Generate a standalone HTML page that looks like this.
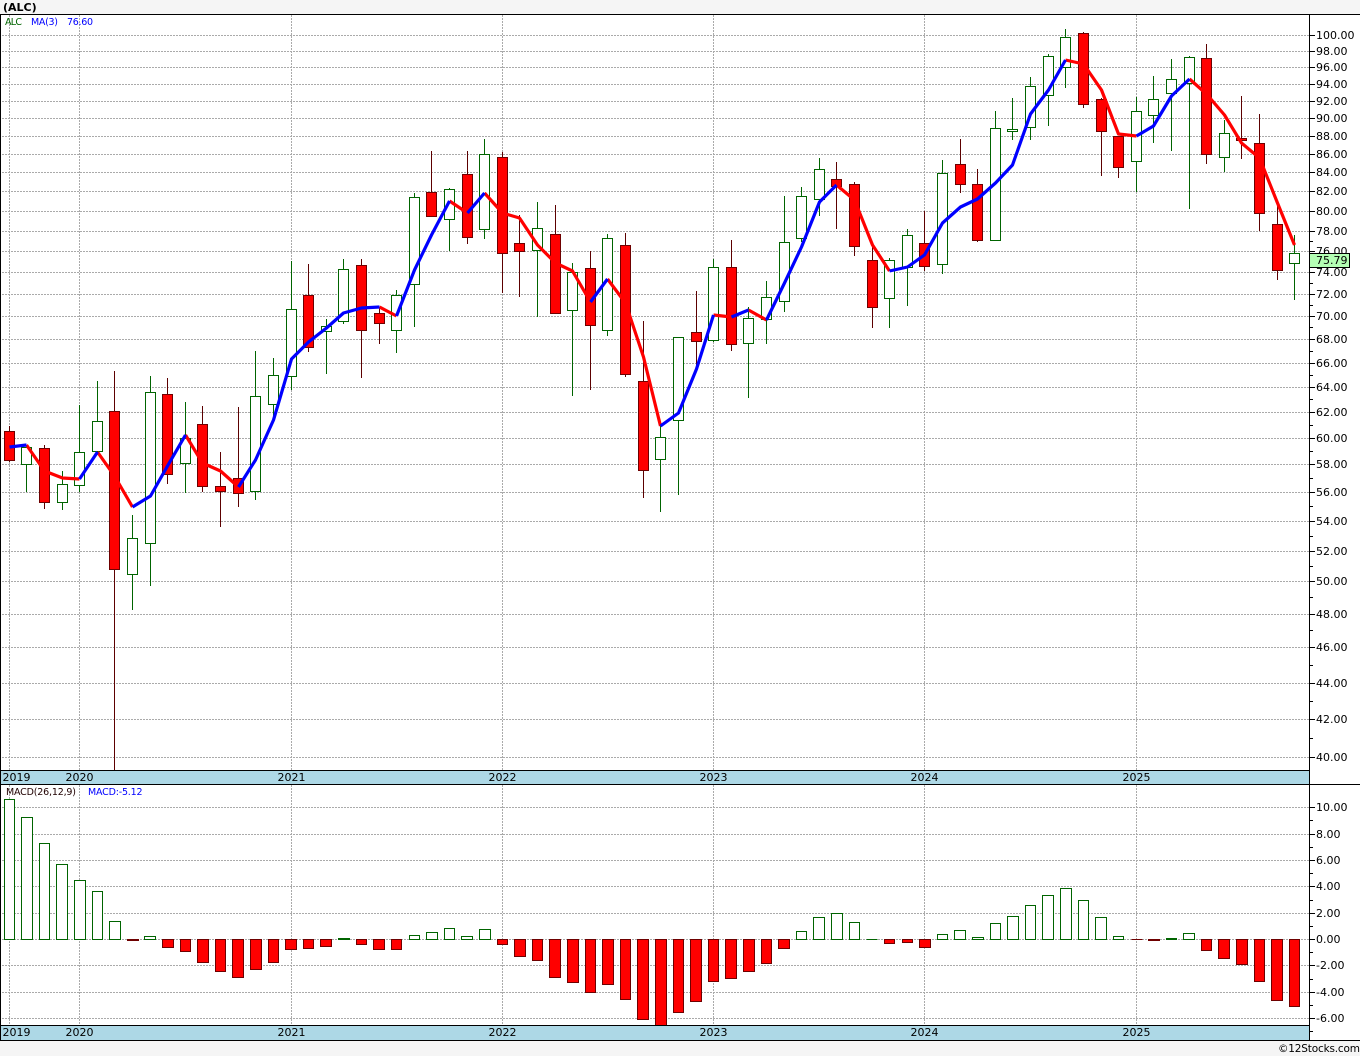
<!DOCTYPE html>
<html lang="en">
<head>
<meta charset="utf-8">
<title>(ALC)</title>
<style>
html,body{margin:0;padding:0;width:1360px;height:1056px;overflow:hidden;background:#f5f5f5}
svg{position:absolute;left:0;top:0;display:block}
text{font-family:"DejaVu Sans","Liberation Sans",sans-serif;fill:#000}
.ax{font-size:11px}
.lg{font-size:9.5px}
</style>
</head>
<body>
<svg width="1360" height="1056" viewBox="0 0 1360 1056" xmlns="http://www.w3.org/2000/svg">
<rect x="0" y="0" width="1360" height="1056" fill="#f5f5f5"/>
<rect x="0" y="14" width="1360" height="1026" fill="#fff"/>
<text x="3" y="11" style="font-size:11px;font-weight:bold">(ALC)</text>

<!-- grid -->
<g fill="none" stroke="#aaaaaa" stroke-width="1" stroke-dasharray="2 1" shape-rendering="crispEdges">
<path d="M2 35.5H1309M2 51.5H1309M2 67.5H1309M2 84.5H1309M2 101.5H1309M2 118.5H1309M2 136.5H1309M2 154.5H1309M2 172.5H1309M2 191.5H1309M2 211.5H1309M2 231.5H1309M2 251.5H1309M2 272.5H1309M2 294.5H1309M2 316.5H1309M2 339.5H1309M2 363.5H1309M2 387.5H1309M2 412.5H1309M2 438.5H1309M2 464.5H1309M2 492.5H1309M2 521.5H1309M2 551.5H1309M2 581.5H1309M2 614.5H1309M2 647.5H1309M2 683.5H1309M2 719.5H1309M2 757.5H1309"/>
<path d="M2 807.5H1309M2 834.5H1309M2 860.5H1309M2 886.5H1309M2 913.5H1309M2 939.5H1309M2 965.5H1309M2 992.5H1309M2 1018.5H1309"/>
<path d="M9.5 15V770M79.5 15V770M291.5 15V770M502.5 15V770M713.5 15V770M924.5 15V770M1136.5 15V770M9.5 785V1025M79.5 785V1025M291.5 785V1025M502.5 785V1025M713.5 785V1025M924.5 785V1025M1136.5 785V1025"/>
</g>

<!-- wicks -->
<g fill="none" stroke-width="1" shape-rendering="crispEdges">
<path stroke="#006400" d="M26.5 445V492M62.5 471V510M79.5 405V492M97.5 381V452M132.5 515V610M150.5 376V586M185.5 402V493M255.5 351V500M273.5 358V420M291.5 261V390M326.5 319V374M343.5 259V324M396.5 290V353M414.5 193V327M449.5 188V251M484.5 139V239M537.5 202V317M572.5 263V396M607.5 234V336M660.5 426V512M678.5 337V495M713.5 259V342M748.5 307V398M766.5 281V344M784.5 196V312M801.5 187V242M819.5 158V216M889.5 258V328M907.5 229V306M942.5 160V274M995.5 111V240M1012.5 98V140M1030.5 77V140M1048.5 54V126M1065.5 29V88M1136.5 97V192M1153.5 76V143M1171.5 59V151M1189.5 56V209M1224.5 120V172M1294.5 235V300"/>
<path stroke="#5c0000" d="M9.5 426V462M44.5 445V509M114.5 371V770M167.5 378V484M202.5 406V492M220.5 452V527M238.5 407V507M308.5 264V352M361.5 259V378M379.5 308V344M431.5 151V216M467.5 151V244M502.5 152V293M519.5 215V297M555.5 205V314M590.5 251V390M625.5 233V377M643.5 321V498M696.5 291V370M731.5 240V351M836.5 162V229M854.5 182V256M872.5 245V328M924.5 211V271M960.5 139V193M977.5 169V242M1083.5 32V108M1101.5 98V176M1118.5 136V178M1206.5 44V164M1241.5 96V159M1259.5 114V231M1277.5 202V280"/>
</g>

<!-- candle bodies -->
<g stroke-width="1" shape-rendering="crispEdges">
<path fill="#fff" stroke="#006400" d="M21.5 447.5h10v17h-10zM57.5 484.5h10v18h-10zM74.5 452.5h10v33h-10zM92.5 421.5h10v30h-10zM127.5 538.5h10v36h-10zM145.5 392.5h10v151h-10zM180.5 438.5h10v25h-10zM250.5 396.5h10v95h-10zM268.5 375.5h10v29h-10zM286.5 309.5h10v67h-10zM321.5 326.5h10v5h-10zM338.5 269.5h10v52h-10zM391.5 295.5h10v35h-10zM409.5 197.5h10v87h-10zM444.5 189.5h10v30h-10zM479.5 154.5h10v75h-10zM532.5 228.5h10v22h-10zM567.5 272.5h10v38h-10zM602.5 238.5h10v92h-10zM655.5 437.5h10v22h-10zM673.5 337.5h10v83h-10zM708.5 267.5h10v73h-10zM743.5 318.5h10v25h-10zM761.5 297.5h10v22h-10zM779.5 242.5h10v59h-10zM796.5 196.5h10v42h-10zM814.5 169.5h10v30h-10zM884.5 260.5h10v38h-10zM902.5 235.5h10v32h-10zM937.5 173.5h10v91h-10zM990.5 128.5h10v112h-10zM1007.5 129.5h10v2h-10zM1025.5 86.5h10v41h-10zM1043.5 56.5h10v39h-10zM1060.5 37.5h10v30h-10zM1131.5 111.5h10v50h-10zM1148.5 99.5h10v16h-10zM1166.5 79.5h10v14h-10zM1184.5 57.5h10v26h-10zM1219.5 133.5h10v24h-10zM1289.5 253.5h10v10h-10z"/>
<path fill="#ff0000" stroke="#6e0000" d="M4.5 431.5h10v29h-10zM39.5 448.5h10v54h-10zM109.5 411.5h10v158h-10zM162.5 394.5h10v80h-10zM197.5 424.5h10v62h-10zM215.5 486.5h10v5h-10zM233.5 478.5h10v15h-10zM303.5 295.5h10v52h-10zM356.5 265.5h10v65h-10zM374.5 313.5h10v10h-10zM426.5 192.5h10v24h-10zM462.5 174.5h10v63h-10zM497.5 157.5h10v96h-10zM514.5 243.5h10v8h-10zM550.5 234.5h10v79h-10zM585.5 268.5h10v57h-10zM620.5 245.5h10v129h-10zM638.5 381.5h10v89h-10zM691.5 332.5h10v9h-10zM726.5 267.5h10v77h-10zM831.5 179.5h10v7h-10zM849.5 184.5h10v62h-10zM867.5 260.5h10v47h-10zM919.5 243.5h10v23h-10zM955.5 164.5h10v20h-10zM972.5 184.5h10v56h-10zM1078.5 33.5h10v71h-10zM1096.5 99.5h10v32h-10zM1113.5 136.5h10v31h-10zM1201.5 58.5h10v96h-10zM1236.5 138.5h10v2h-10zM1254.5 143.5h10v70h-10zM1272.5 224.5h10v46h-10z"/>
</g>

<!-- moving average -->
<g fill="none" stroke-width="3.2" stroke-linejoin="round" stroke-linecap="butt">
<path stroke="#ff0000" d="M26.5 445L44.5 471L62.5 478L79.5 479M97.5 452L114.5 476L132.5 507M185.5 435L202.5 463L220.5 471L238.5 487M379.5 307L396.5 316M449.5 201L467.5 213M484.5 193L502.5 213L519.5 218L537.5 245L555.5 263L572.5 271L590.5 302M607.5 279L625.5 303L643.5 357L660.5 426M713.5 315L731.5 317M748.5 310L766.5 320M836.5 185L854.5 200L872.5 245L889.5 271M1065.5 60L1083.5 64L1101.5 90L1118.5 134L1136.5 136M1189.5 79L1206.5 94L1224.5 115L1241.5 143L1259.5 158L1277.5 203L1294.5 245"/>
<path stroke="#0000ff" d="M9.5 447L26.5 445M79.5 479L97.5 452M132.5 507L150.5 496L167.5 466L185.5 435M238.5 487L255.5 460L273.5 420L291.5 359L308.5 342L326.5 328L343.5 313L361.5 308L379.5 307M396.5 316L414.5 270L431.5 235L449.5 201M467.5 213L484.5 193M590.5 302L607.5 279M660.5 426L678.5 413L696.5 369L713.5 315M731.5 317L748.5 310M766.5 320L784.5 283L801.5 247L819.5 202L836.5 185M889.5 271L907.5 267L924.5 255L942.5 223L960.5 207L977.5 199L995.5 183L1012.5 165L1030.5 114L1048.5 90L1065.5 60M1136.5 136L1153.5 126L1171.5 96L1189.5 79"/>
</g>

<!-- MACD bars -->
<g stroke-width="1" shape-rendering="crispEdges">
<path fill="#fff" stroke="#006400" d="M4.5 939.5V799.5h10V939.5zM21.5 939.5V817.5h11V939.5zM39.5 939.5V843.5h10V939.5zM56.5 939.5V864.5h11V939.5zM74.5 939.5V880.5h11V939.5zM92.5 939.5V891.5h10V939.5zM109.5 939.5V921.5h11V939.5zM144.5 939.5V936.5h11V939.5zM338.5 939.5V938.5h11V939.5zM409.5 939.5V935.5h10V939.5zM426.5 939.5V932.5h11V939.5zM444.5 939.5V928.5h10V939.5zM461.5 939.5V936.5h11V939.5zM479.5 939.5V929.5h11V939.5zM796.5 939.5V931.5h10V939.5zM813.5 939.5V917.5h11V939.5zM831.5 939.5V913.5h11V939.5zM849.5 939.5V922.5h10V939.5zM866.5 939.5h11M937.5 939.5V934.5h10V939.5zM954.5 939.5V930.5h11V939.5zM972.5 939.5V937.5h11V939.5zM990.5 939.5V923.5h10V939.5zM1007.5 939.5V916.5h11V939.5zM1025.5 939.5V905.5h10V939.5zM1042.5 939.5V895.5h11V939.5zM1060.5 939.5V888.5h11V939.5zM1078.5 939.5V900.5h10V939.5zM1095.5 939.5V917.5h11V939.5zM1113.5 939.5V936.5h10V939.5zM1166.5 939.5V938.5h10V939.5zM1183.5 939.5V933.5h11V939.5z"/>
<path fill="#ff0000" stroke="#6e0000" d="M127.5 939.5V940.5h11V939.5zM162.5 939.5V947.5h11V939.5zM180.5 939.5V951.5h10V939.5zM197.5 939.5V962.5h11V939.5zM215.5 939.5V971.5h10V939.5zM232.5 939.5V977.5h11V939.5zM250.5 939.5V969.5h11V939.5zM268.5 939.5V962.5h10V939.5zM285.5 939.5V949.5h11V939.5zM303.5 939.5V948.5h10V939.5zM320.5 939.5V946.5h11V939.5zM356.5 939.5V944.5h10V939.5zM373.5 939.5V949.5h11V939.5zM391.5 939.5V949.5h10V939.5zM497.5 939.5V944.5h10V939.5zM514.5 939.5V956.5h11V939.5zM532.5 939.5V960.5h10V939.5zM549.5 939.5V977.5h11V939.5zM567.5 939.5V982.5h11V939.5zM585.5 939.5V992.5h10V939.5zM602.5 939.5V984.5h11V939.5zM620.5 939.5V999.5h10V939.5zM637.5 939.5V1019.5h11V939.5zM655.5 939.5V1025.5h11V939.5zM673.5 939.5V1012.5h10V939.5zM690.5 939.5V1001.5h11V939.5zM708.5 939.5V981.5h10V939.5zM725.5 939.5V978.5h11V939.5zM743.5 939.5V971.5h11V939.5zM761.5 939.5V963.5h10V939.5zM778.5 939.5V948.5h11V939.5zM884.5 939.5V943.5h10V939.5zM902.5 939.5V942.5h10V939.5zM919.5 939.5V947.5h11V939.5zM1131.5 939.5h11M1148.5 939.5V940.5h11V939.5zM1201.5 939.5V950.5h10V939.5zM1218.5 939.5V958.5h11V939.5zM1236.5 939.5V964.5h11V939.5zM1254.5 939.5V981.5h10V939.5zM1271.5 939.5V1000.5h11V939.5zM1289.5 939.5V1006.5h10V939.5z"/>
</g>

<!-- date bars -->
<rect x="0" y="770" width="1309" height="14" fill="#add8e6"/>
<rect x="0" y="1025" width="1309" height="15" fill="#add8e6"/>

<!-- frame and ticks -->
<g fill="none" stroke="#000" stroke-width="1" shape-rendering="crispEdges">
<path d="M0 14.5H1360M0 770.5H1309M0 784.5H1360M0 1025.5H1309M0 1040.5H1360M0.5 14V1040M1309.5 14V1040"/>
<path d="M1309 35.5h6M1309 51.5h6M1309 67.5h6M1309 84.5h6M1309 101.5h6M1309 118.5h6M1309 136.5h6M1309 154.5h6M1309 172.5h6M1309 191.5h6M1309 211.5h6M1309 231.5h6M1309 251.5h6M1309 272.5h6M1309 294.5h6M1309 316.5h6M1309 339.5h6M1309 363.5h6M1309 387.5h6M1309 412.5h6M1309 438.5h6M1309 464.5h6M1309 492.5h6M1309 521.5h6M1309 551.5h6M1309 581.5h6M1309 614.5h6M1309 647.5h6M1309 683.5h6M1309 719.5h6M1309 757.5h6"/>
<path d="M1309 241.5h4M1309 283.5h4M1309 305.5h4M1309 327.5h4M1309 351.5h4M1309 375.5h4M1309 399.5h4M1309 425.5h4M1309 451.5h4M1309 478.5h4M1309 506.5h4M1309 536.5h4M1309 566.5h4M1309 597.5h4M1309 630.5h4M1309 665.5h4M1309 701.5h4M1309 738.5h4"/>
<path d="M1309 807.5h6M1309 834.5h6M1309 860.5h6M1309 886.5h6M1309 913.5h6M1309 939.5h6M1309 965.5h6M1309 992.5h6M1309 1018.5h6"/>
<path d="M1309 820.5h4M1309 847.5h4M1309 873.5h4M1309 900.5h4M1309 926.5h4M1309 952.5h4M1309 979.5h4M1309 1005.5h4M1309 1031.5h4"/>
</g>

<!-- axis labels -->
<g class="ax">
<text class="ax" x="1316" y="39">100.00</text>
<text class="ax" x="1316" y="55">98.00</text>
<text class="ax" x="1316" y="71">96.00</text>
<text class="ax" x="1316" y="88">94.00</text>
<text class="ax" x="1316" y="105">92.00</text>
<text class="ax" x="1316" y="122">90.00</text>
<text class="ax" x="1316" y="140">88.00</text>
<text class="ax" x="1316" y="158">86.00</text>
<text class="ax" x="1316" y="176">84.00</text>
<text class="ax" x="1316" y="195">82.00</text>
<text class="ax" x="1316" y="215">80.00</text>
<text class="ax" x="1316" y="235">78.00</text>
<text class="ax" x="1316" y="255">76.00</text>
<text class="ax" x="1316" y="276">74.00</text>
<text class="ax" x="1316" y="298">72.00</text>
<text class="ax" x="1316" y="320">70.00</text>
<text class="ax" x="1316" y="343">68.00</text>
<text class="ax" x="1316" y="367">66.00</text>
<text class="ax" x="1316" y="391">64.00</text>
<text class="ax" x="1316" y="416">62.00</text>
<text class="ax" x="1316" y="442">60.00</text>
<text class="ax" x="1316" y="468">58.00</text>
<text class="ax" x="1316" y="496">56.00</text>
<text class="ax" x="1316" y="525">54.00</text>
<text class="ax" x="1316" y="555">52.00</text>
<text class="ax" x="1316" y="585">50.00</text>
<text class="ax" x="1316" y="618">48.00</text>
<text class="ax" x="1316" y="651">46.00</text>
<text class="ax" x="1316" y="687">44.00</text>
<text class="ax" x="1316" y="723">42.00</text>
<text class="ax" x="1316" y="761">40.00</text>
<text class="ax" x="1316" y="811">10.00</text>
<text class="ax" x="1316" y="838">8.00</text>
<text class="ax" x="1316" y="864">6.00</text>
<text class="ax" x="1316" y="890">4.00</text>
<text class="ax" x="1316" y="917">2.00</text>
<text class="ax" x="1316" y="943">0.00</text>
<text class="ax" x="1316" y="969">-2.00</text>
<text class="ax" x="1316" y="996">-4.00</text>
<text class="ax" x="1316" y="1022">-6.00</text>
</g>

<!-- price box -->
<rect x="1309.5" y="253.5" width="40" height="14" fill="#b4ffb4" stroke="#000" stroke-width="1" shape-rendering="crispEdges"/>
<text class="ax" x="1316" y="264">75.79</text>

<!-- date labels -->
<text class="ax" x="2.5" y="781">2019</text>
<text class="ax" x="79.5" y="781" text-anchor="middle">2020</text>
<text class="ax" x="291.5" y="781" text-anchor="middle">2021</text>
<text class="ax" x="502.5" y="781" text-anchor="middle">2022</text>
<text class="ax" x="713.5" y="781" text-anchor="middle">2023</text>
<text class="ax" x="924.5" y="781" text-anchor="middle">2024</text>
<text class="ax" x="1136.5" y="781" text-anchor="middle">2025</text>
<text class="ax" x="2.5" y="1036">2019</text>
<text class="ax" x="79.5" y="1036" text-anchor="middle">2020</text>
<text class="ax" x="291.5" y="1036" text-anchor="middle">2021</text>
<text class="ax" x="502.5" y="1036" text-anchor="middle">2022</text>
<text class="ax" x="713.5" y="1036" text-anchor="middle">2023</text>
<text class="ax" x="924.5" y="1036" text-anchor="middle">2024</text>
<text class="ax" x="1136.5" y="1036" text-anchor="middle">2025</text>

<!-- legends -->
<text class="lg" x="5" y="25" style="fill:#006400" textLength="17" lengthAdjust="spacing">ALC</text>
<text class="lg" x="31" y="25" style="fill:#0000ff" textLength="27" lengthAdjust="spacing">MA(3)</text>
<text class="lg" x="67" y="25" style="fill:#0000ff" textLength="26" lengthAdjust="spacing">76.60</text>
<text class="lg" x="6" y="795" style="fill:#200000" textLength="70" lengthAdjust="spacing">MACD(26,12,9)</text>
<text class="lg" x="88" y="795" style="fill:#0000ff" textLength="54.5" lengthAdjust="spacing">MACD:-5.12</text>

<text x="1278" y="1052" style="font-size:10.5px" textLength="82" lengthAdjust="spacing">©12Stocks.com</text>
</svg>
</body>
</html>
